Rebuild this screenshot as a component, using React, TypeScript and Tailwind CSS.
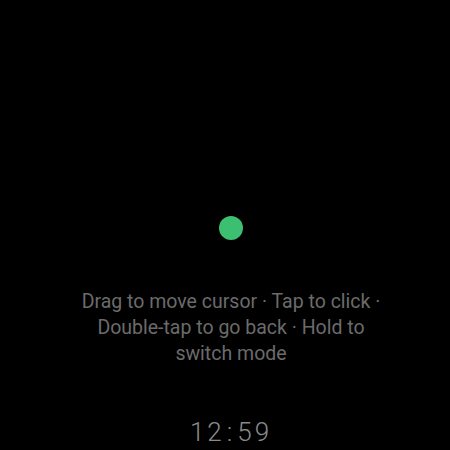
import React from "react";

const App = () => {
  return (
    <div
      className="w-[450px] h-[450px] bg-black pl-3 flex flex-col items-center overflow-hidden"
      style={{ fontFamily: "Roboto, 'Noto Sans', sans-serif" }}
    >
      {/* Cursor dot */}
      <div className="mt-[216px] w-6 h-6 rounded-full bg-[#3dbf72]" />

      {/* Hint */}
      <p className="mt-[49px] w-[312px] text-center text-[19.5px] leading-[26px] text-[#6b6b6b]">
        Drag to move cursor · Tap to click · Double-tap to go back · Hold to switch mode
      </p>

      {/* Clock */}
      <div className="mt-auto mb-[2px] text-[26px] leading-[32px] tracking-[3px] font-light text-[#8a8a8a]">
        12<span className="mx-[2px]">:</span>59
      </div>
    </div>
  );
};

export default App;
